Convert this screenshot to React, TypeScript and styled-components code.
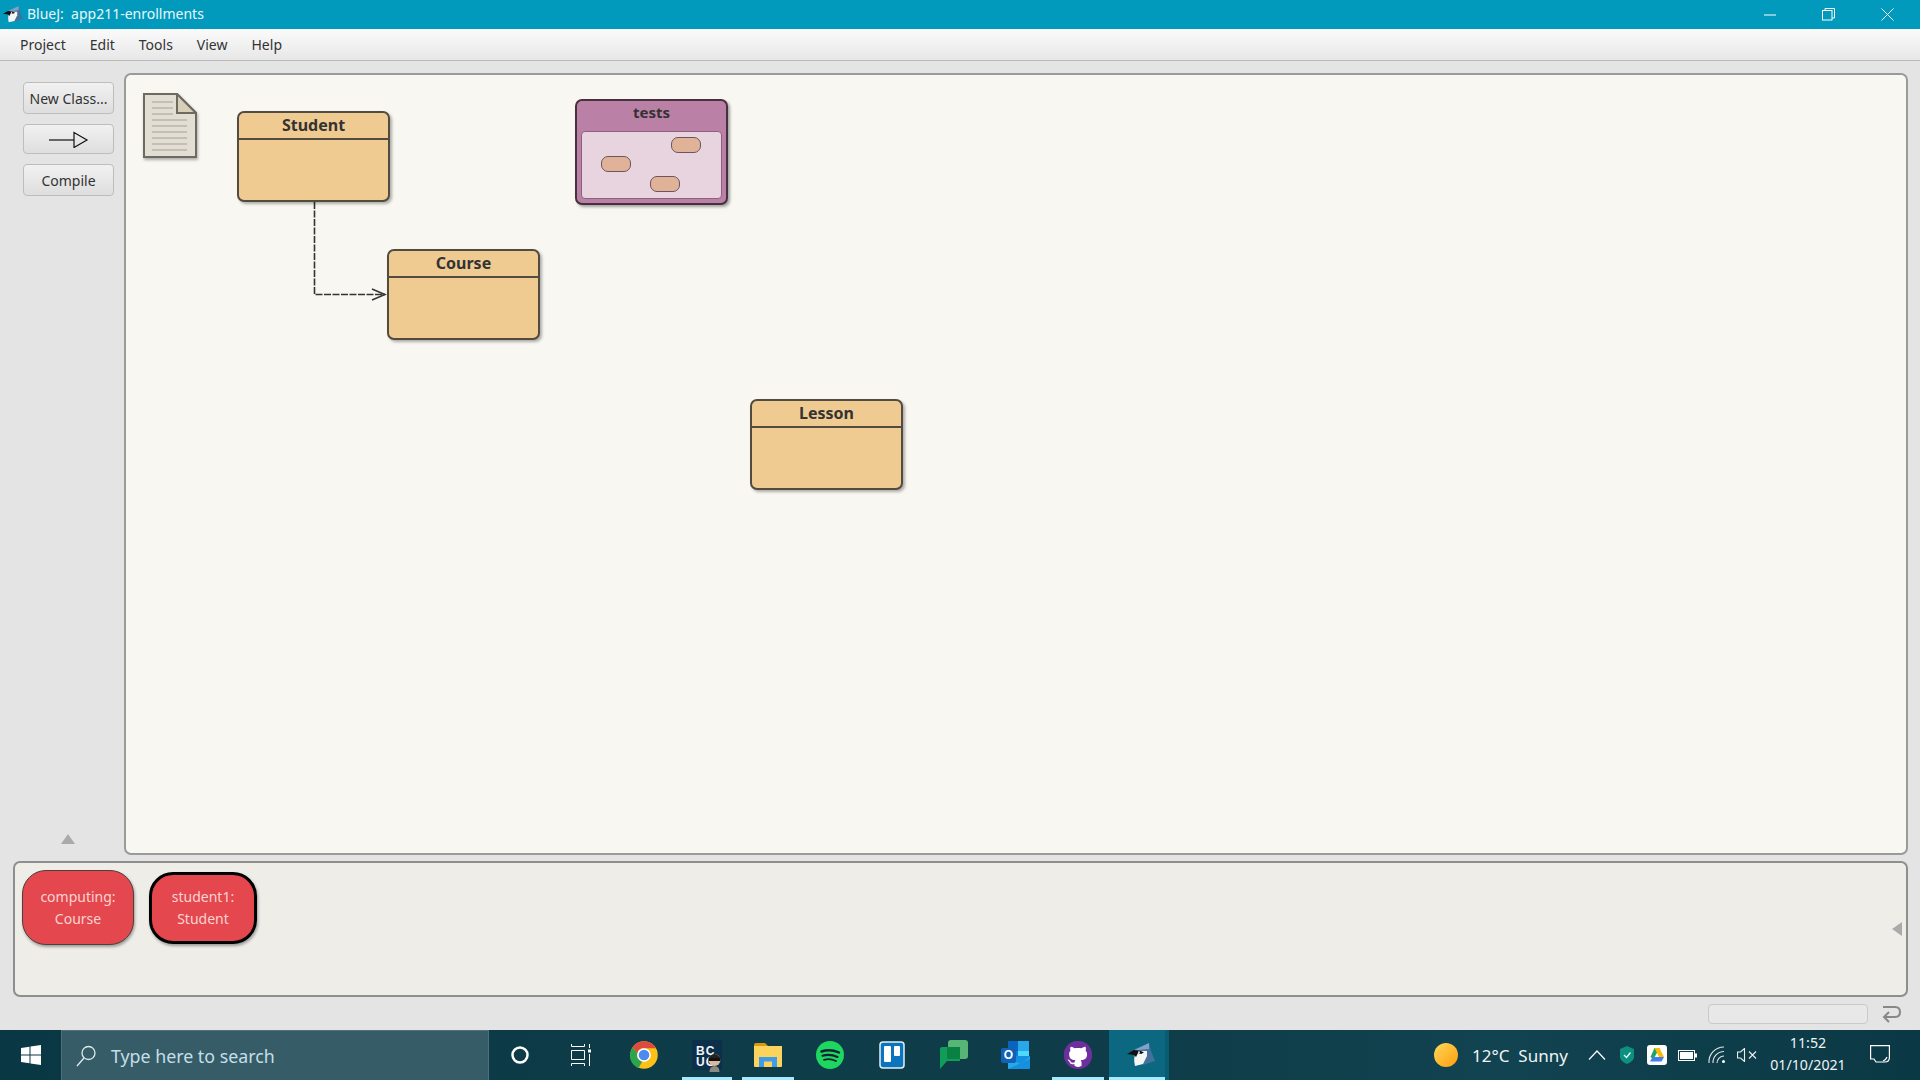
import React from 'react'
import styled, {createGlobalStyle} from 'styled-components'
import {FaGithub} from 'react-icons/fa'

const uiFont = `"Noto Sans", "Open Sans", "Liberation Sans", sans-serif`

const GlobalStyle = createGlobalStyle`
    html, body {
        margin: 0;
        padding: 0;
        height: 100%;
        overflow: hidden;
    }
    body {
        background: #e4e4e4;
        font-family: ${uiFont};
    }
`

const Window = styled.div`
    display: flex;
    flex-direction: column;
    width: 1920px;
    height: 1080px;
    background: #e4e4e4;
`

const TitleBar = styled.div`
    display: flex;
    align-items: center;
    flex: 0 0 29px;
    padding: 0 3px 0 3px;
    background: #019abd;
    color: #e8f7fb;
    font-size: 14px;
`

const TitleText = styled.span`
    margin: -2px 0 0 4px;
    white-space: pre;
`

const WindowButtons = styled.div`
    display: flex;
    margin-left: auto;
`

const WindowButton = styled.div`
    display: flex;
    align-items: center;
    justify-content: center;
    width: 59px;
    height: 29px;
`

const MenuBar = styled.div`
    display: flex;
    align-items: center;
    gap: 24px;
    flex: 0 0 32px;
    box-sizing: border-box;
    padding: 0 0 1px 20px;
    background: linear-gradient(#fbfbfb, #e7e7e7);
    border-bottom: 1px solid #b9b9b9;
    color: #333;
    font-size: 14px;
`

const Workspace = styled.div`
    display: flex;
    flex: 1;
    min-height: 0;
    padding: 12px 12px 6px 0;
`

const Sidebar = styled.div`
    display: flex;
    flex-direction: column;
    flex: 0 0 124px;
    box-sizing: border-box;
    padding: 9px 0 11px 23px;
`

const ToolButton = styled.div`
    display: flex;
    align-items: center;
    justify-content: center;
    box-sizing: border-box;
    width: 91px;
    height: ${p => p.$h || 31}px;
    margin-bottom: 10px;
    border: 1px solid #bdbdbd;
    border-radius: 4px;
    background: linear-gradient(#f1f1f1, #dedede);
    color: #333;
    font-size: 14px;
    white-space: nowrap;
`

const CollapseUp = styled.div`
    width: 0;
    height: 0;
    margin: auto 0 0 38px;
    border-left: 7.5px solid transparent;
    border-right: 7.5px solid transparent;
    border-bottom: 10px solid #aaa;
`

const Canvas = styled.div`
    position: relative;
    flex: 1;
    box-sizing: border-box;
    border: 2px solid #9a9a9a;
    border-radius: 7px;
    background: #f8f7f2;
`

const ArrowLayer = styled.svg`
    position: absolute;
    left: 0;
    top: 0;
    width: 100%;
    height: 100%;
`

const NoteIcon = styled.svg`
    position: absolute;
    left: 17px;
    top: 18px;
    filter: drop-shadow(1px 2px 1.5px rgba(0,0,0,.3));
`

const ClassNode = styled.div`
    position: absolute;
    left: ${p => p.$x}px;
    top: ${p => p.$y}px;
    box-sizing: border-box;
    width: 153px;
    height: 91px;
    border: 2px solid #514b40;
    border-radius: 7px;
    background: #efcb92;
    box-shadow: 2px 2px 3px rgba(0,0,0,.3);
`

const ClassName = styled.div`
    box-sizing: border-box;
    height: 27px;
    line-height: 24px;
    border-bottom: 2px solid #514b40;
    color: #333;
    font-size: 16px;
    font-weight: 700;
    text-align: center;
`

const PackageNode = styled.div`
    position: absolute;
    left: 449px;
    top: 24px;
    box-sizing: border-box;
    width: 153px;
    height: 106px;
    padding: 0 4px;
    border: 2px solid #47303f;
    border-radius: 7px;
    background: #bb80a6;
    box-shadow: 2px 2px 3px rgba(0,0,0,.35);
`

const PackageName = styled.div`
    height: 30px;
    line-height: 22px;
    color: #333;
    font-size: 15px;
    font-weight: 700;
    text-align: center;
`

const PackageInner = styled.div`
    position: relative;
    height: 66px;
    border: 1px solid #8f5f80;
    border-radius: 4px;
    background: #e8d4df;
`

const MiniClass = styled.div`
    position: absolute;
    left: ${p => p.$x}px;
    top: ${p => p.$y}px;
    box-sizing: border-box;
    width: 30px;
    height: 16px;
    border: 1.5px solid #6b5560;
    border-radius: 7px;
    background: #e0b398;
`

const Bench = styled.div`
    display: flex;
    align-items: center;
    justify-content: space-between;
    flex: 0 0 136px;
    box-sizing: border-box;
    margin: 0 12px 0 13px;
    padding: 0 4px 0 7px;
    border: 2px solid #8e8e8e;
    border-radius: 7px;
    background: #eeede8;
`

const BenchObjects = styled.div`
    display: flex;
    align-items: flex-start;
    align-self: flex-start;
    gap: 15px;
    padding-top: 7px;
`

const ObjectCard = styled.div`
    display: flex;
    align-items: center;
    justify-content: center;
    box-sizing: border-box;
    width: ${p => (p.$selected ? 108 : 112)}px;
    height: ${p => (p.$selected ? 72 : 75)}px;
    margin-top: ${p => (p.$selected ? 2 : 0)}px;
    border: ${p => (p.$selected ? '3px solid #000' : '1.5px solid #4c3f3f')};
    border-radius: 24px;
    background: #e4474d;
    box-shadow: 1px 2px 3px rgba(0,0,0,.35);
    color: #fbd3d3;
    font-size: 14px;
    line-height: 22px;
    text-align: center;
`

const CollapseLeft = styled.div`
    width: 0;
    height: 0;
    border-top: 7.5px solid transparent;
    border-bottom: 7.5px solid transparent;
    border-right: 10px solid #aaa;
`

const StatusRow = styled.div`
    display: flex;
    align-items: center;
    justify-content: flex-end;
    gap: 13px;
    flex: 0 0 33px;
    padding-right: 19px;
`

const StatusField = styled.div`
    box-sizing: border-box;
    width: 160px;
    height: 20px;
    border: 1.5px solid #cacaca;
    border-radius: 4px;
    background: #e8e8e8;
`

const Taskbar = styled.div`
    display: flex;
    align-items: stretch;
    flex: 0 0 50px;
    background: linear-gradient(90deg, #0a3744, #0f3c49 40%, #0f3c49 60%, #124350 78%, #0b3845);
    color: #eef4f5;
`

const StartButton = styled.div`
    display: flex;
    align-items: center;
    justify-content: center;
    width: 61px;
`

const SearchBox = styled.div`
    display: flex;
    align-items: center;
    gap: 15px;
    box-sizing: border-box;
    width: 428px;
    padding-left: 14px;
    background: #365d67;
    border: 1px solid #4f7079;
    border-width: 1px 1px 0 1px;
    color: #c5dfe8;
    font-size: 17.8px;
`

const TaskSlot = styled.div`
    position: relative;
    display: flex;
    align-items: center;
    justify-content: center;
    box-sizing: border-box;
    width: ${p => p.$w || 62}px;
    padding-left: ${p => (p.$current ? 3 : 0)}px;
    background: ${p => (p.$current ? 'linear-gradient(90deg, #0b6880 94%, #0a5c72 94%)' : 'transparent')};

    &::after {
        content: '';
        display: ${p => (p.$open ? 'block' : 'none')};
        position: absolute;
        left: ${p => (p.$current ? 0 : 5)}px;
        right: ${p => (p.$current ? 4 : 5)}px;
        bottom: 0;
        height: 3px;
        background: #a6ebfd;
    }
`

const BcBadge = styled.div`
    position: relative;
    box-sizing: border-box;
    width: 30px;
    height: 30px;
    padding: 6px 0 0 4px;
    background: #0c2f4c;
    color: #f2f6fa;
    font-family: "Liberation Sans", sans-serif;
    font-size: 12px;
    font-weight: 700;
    line-height: 11px;
    letter-spacing: 1px;
`

const BcFace = styled.svg`
    position: absolute;
    right: 0;
    bottom: -2px;
`

const OutlookWrap = styled.div`
    position: relative;
    width: 30px;
    height: 28px;
`

const OutlookLetter = styled.div`
    position: absolute;
    left: 0;
    top: 7px;
    width: 15px;
    height: 15px;
    line-height: 15px;
    border-radius: 2px;
    background: #0f62b8;
    color: #fff;
    font-family: "Liberation Sans", sans-serif;
    font-size: 12px;
    font-weight: 700;
    text-align: center;
`

const GithubBadge = styled.div`
    display: flex;
    align-items: center;
    justify-content: center;
    width: 28px;
    height: 28px;
    border-radius: 50%;
    background: radial-gradient(circle, #fff 58%, #6e2f9e 60%);
    color: #6e2f9e;
`

const Tray = styled.div`
    display: flex;
    align-items: center;
    margin-left: auto;
    padding-right: 30px;
`

const Sun = styled.div`
    width: 24px;
    height: 24px;
    margin-right: 14px;
    border-radius: 50%;
    background: linear-gradient(135deg, #ffd85c, #ff9d0a);
`

const Weather = styled.span`
    width: 110px;
    font-size: 17px;
    white-space: pre;
`

const TrayIcon = styled.div`
    display: flex;
    align-items: center;
    justify-content: center;
    width: 30px;
`

const Clock = styled.div`
    width: 84px;
    margin: 0 20px 2px 4px;
    font-size: 14.2px;
    line-height: 22px;
    text-align: center;
`

const BirdIcon = ({width, height}: {width: number; height: number}) => (
    <svg width={width} height={height} viewBox="0 0 28 24">
        <path d="M7 7 L22 0 L24 8 L28 18 L16 22 L12 10 Z" fill="#44709c"/>
        <path d="M7 7 L22 0 L22 6 L12 7 Z" fill="#7fa3c8"/>
        <path d="M9 8 L20 8 L20 13 L16 21 L8 23 Q6 16 9 8 Z" fill="#f5f5f5"/>
        <path d="M0 11 L7 7 L14 8 L17 9.500 L14 11 L11 10 L9 14 L7 12 Z" fill="#111"/>
        <circle cx="12" cy="9.200" r="0.900" fill="#fff"/>
    </svg>
)

const ChromeIcon = () => (
    <svg width="30" height="30" viewBox="0 0 48 48">
        <circle cx="24" cy="24" r="22" fill="#fbc116"/>
        <path d="M24 2a22 22 0 0 1 19 11H24a11 11 0 0 0-10.500 7.600L5.500 12A22 22 0 0 1 24 2z" fill="#dd4b3e"/>
        <path d="M5.500 12l8 8.600A11 11 0 0 0 21 34.600L15 45A22 22 0 0 1 5.500 12z" fill="#2da44e"/>
        <circle cx="24" cy="24" r="11" fill="#fff"/>
        <circle cx="24" cy="24" r="8.500" fill="#4d8bf0"/>
    </svg>
)

const FilesIcon = () => (
    <svg width="28" height="24" viewBox="0 0 28 24">
        <path d="M0 2 Q0 0 2 0 H11 L14 3 V6 H0 Z" fill="#d99a0c"/>
        <path d="M0 3 H28 V23 Q28 24 27 24 H1 Q0 24 0 23 Z" fill="#fcd35c"/>
        <path d="M5 24 V14 H23 V24 H18 V18.500 H10 V24 Z" fill="#3f9ce8"/>
    </svg>
)

const SpotifyIcon = () => (
    <svg width="28" height="28" viewBox="0 0 28 28">
        <circle cx="14" cy="14" r="14" fill="#1ed760"/>
        <path d="M5.500 10.500 Q14 7.500 23 11.500" stroke="#123" strokeWidth="2.400" fill="none" strokeLinecap="round"/>
        <path d="M6.500 14.800 Q14 12.500 21.500 16" stroke="#123" strokeWidth="2.100" fill="none" strokeLinecap="round"/>
        <path d="M8 18.800 Q14 17 20 20" stroke="#123" strokeWidth="1.800" fill="none" strokeLinecap="round"/>
    </svg>
)

const TrelloIcon = () => (
    <svg width="26" height="28" viewBox="0 0 26 28">
        <rect x="1" y="1" width="24" height="26" rx="3" fill="#0a75bc" stroke="#e4f0f6" strokeWidth="1.500"/>
        <rect x="5" y="5" width="7" height="16" rx="1" fill="#fff"/>
        <rect x="15" y="5" width="6" height="10" rx="1" fill="#fff"/>
    </svg>
)

const ChatIcon = () => (
    <svg width="28" height="30" viewBox="0 0 28 30">
        <rect x="8" y="0" width="20" height="19" rx="3" fill="#57b676"/>
        <path d="M2 7 H20 V21 H7 L0 29 V9 Q0 7 2 7 Z" fill="#0f9d58"/>
        <rect x="7" y="7" width="13" height="12" rx="1" fill="#0b8043"/>
    </svg>
)

const OutlookIcon = () => (
    <OutlookWrap>
        <svg width="30" height="28" viewBox="0 0 30 28">
            <rect x="7" y="0" width="10" height="10" fill="#0a64bd"/>
            <rect x="17" y="0" width="11" height="10" fill="#28a8ea"/>
            <rect x="7" y="10" width="10" height="10" fill="#0f78d4"/>
            <rect x="17" y="10" width="11" height="10" fill="#50d9ff"/>
            <path d="M7 15 H29 V27 Q29 28 28 28 H8 Q7 28 7 27 Z" fill="#1490df"/>
            <path d="M7 16 L19 23 L29 16 V18 L7 28 Z" fill="#28a8ea"/>
        </svg>
        <OutlookLetter>O</OutlookLetter>
    </OutlookWrap>
)

const DriveIcon = () => (
    <svg width="20" height="20" viewBox="0 0 20 20">
        <rect width="20" height="20" rx="3" fill="#fff"/>
        <path d="M7.500 3 H12.500 L9 9.500 L6.500 14 L3.500 12 Z" fill="#1da462"/>
        <path d="M7.500 3 H12.500 L17 12 H12 Z" fill="#fbbc04"/>
        <path d="M5.500 12 H17 L14.500 16.500 H3 Z" fill="#3f80ed"/>
    </svg>
)

const App = () => (
    <Window>
        <GlobalStyle/>
        <TitleBar>
            <BirdIcon width={20} height={17}/>
            <TitleText>BlueJ:  app211-enrollments</TitleText>
            <WindowButtons>
                <WindowButton>
                    <svg width="12" height="2"><rect width="12" height="1" y="0.500" fill="#fff"/></svg>
                </WindowButton>
                <WindowButton>
                    <svg width="13" height="13" viewBox="0 0 13 13" fill="none" stroke="#fff">
                        <rect x="0.500" y="2.500" width="9.500" height="9.500"/>
                        <path d="M3 2.500 V0.500 H12.500 V10 H10"/>
                    </svg>
                </WindowButton>
                <WindowButton>
                    <svg width="13" height="13" viewBox="0 0 13 13" stroke="#fff"><path d="M0.500 0.500 L12.500 12.500 M12.500 0.500 L0.500 12.500"/></svg>
                </WindowButton>
            </WindowButtons>
        </TitleBar>
        <MenuBar>
            <span>Project</span>
            <span>Edit</span>
            <span>Tools</span>
            <span>View</span>
            <span>Help</span>
        </MenuBar>
        <Workspace>
            <Sidebar>
                <ToolButton $h={32}>New Class...</ToolButton>
                <ToolButton $h={30}>
                    <svg width="40" height="18" viewBox="0 0 40 18" fill="none" stroke="#111" strokeWidth="1.200">
                        <path d="M0 10 H25"/>
                        <path d="M25 2.500 L38 10 L25 17.500 Z"/>
                    </svg>
                </ToolButton>
                <ToolButton $h={32}>Compile</ToolButton>
                <CollapseUp/>
            </Sidebar>
            <Canvas>
                <NoteIcon width="54" height="66" viewBox="0 0 54 66">
                    <path d="M1 1 H34 L53 20 V64 H1 Z" fill="#e2ded3" stroke="#6d6a62" strokeWidth="2"/>
                    <path d="M34 1 L53 20 H34 Z" fill="#d8cfb8" stroke="#6d6a62" strokeWidth="2"/>
                    <path d="M9 9 H30 M9 15 H30 M9 21 H30 M9 27 H44 M9 33 H44 M9 39 H44 M9 45 H44 M9 51 H44 M9 57 H44" stroke="#c3bfb2" strokeWidth="2"/>
                </NoteIcon>
                <ArrowLayer>
                    <path d="M188.500 127 V219.500 H259" fill="none" stroke="#333" strokeWidth="1.600" strokeDasharray="7 1.500"/>
                    <path d="M246 214 L259 219.500 L246 225" fill="none" stroke="#333" strokeWidth="1.500"/>
                </ArrowLayer>
                <ClassNode $x={111} $y={36}><ClassName>Student</ClassName></ClassNode>
                <ClassNode $x={261} $y={174}><ClassName>Course</ClassName></ClassNode>
                <ClassNode $x={624} $y={324}><ClassName>Lesson</ClassName></ClassNode>
                <PackageNode>
                    <PackageName>tests</PackageName>
                    <PackageInner>
                        <MiniClass $x={89} $y={5}/>
                        <MiniClass $x={19} $y={24}/>
                        <MiniClass $x={68} $y={44}/>
                    </PackageInner>
                </PackageNode>
            </Canvas>
        </Workspace>
        <Bench>
            <BenchObjects>
                <ObjectCard>computing:<br/>Course</ObjectCard>
                <ObjectCard $selected>student1:<br/>Student</ObjectCard>
            </BenchObjects>
            <CollapseLeft/>
        </Bench>
        <StatusRow>
            <StatusField/>
            <svg width="20" height="20" viewBox="0 0 20 20" fill="none" stroke="#888" strokeWidth="2">
                <path d="M2 3 H14 Q19 3 19 8 Q19 13 14 13 H3"/>
                <path d="M8 8 L3 13 L8 18"/>
            </svg>
        </StatusRow>
        <Taskbar>
            <StartButton>
                <svg width="20" height="20" viewBox="0 0 20 20" fill="#fff">
                    <path d="M0 3 L8.500 1.800 V9.500 H0 Z M9.500 1.600 L20 0 V9.500 H9.500 Z M0 10.500 H8.500 V18.200 L0 17 Z M9.500 10.500 H20 V20 L9.500 18.400 Z"/>
                </svg>
            </StartButton>
            <SearchBox>
                <svg width="20" height="22" viewBox="0 0 20 22" fill="none" stroke="#dfe9ec" strokeWidth="1.300">
                    <circle cx="12.500" cy="8" r="6.500"/>
                    <path d="M8 13 L1 21"/>
                </svg>
                Type here to search
            </SearchBox>
            <TaskSlot $w={62}>
                <svg width="20" height="20" viewBox="0 0 20 20" fill="none" stroke="#fff" strokeWidth="2.500"><circle cx="10" cy="10" r="7.500"/></svg>
            </TaskSlot>
            <TaskSlot $w={60}>
                <svg width="20" height="22" viewBox="0 0 20 22" fill="none" stroke="#fff" strokeWidth="1">
                    <path d="M0.500 0 V2.500 H13.500 V0 M0.500 6.500 H13.500 V15.500 H0.500 Z M0.500 22 V19.500 H13.500 V22"/>
                    <path d="M18.500 0 V4 M18.500 10 V22"/>
                    <rect x="17" y="5.500" width="3" height="3" fill="#fff" stroke="none"/>
                </svg>
            </TaskSlot>
            <TaskSlot $w={66}><ChromeIcon/></TaskSlot>
            <TaskSlot $w={60} $open>
                <BcBadge>
                    BC<br/>UC
                    <BcFace width="15" height="20" viewBox="0 0 14 20">
                        <path d="M2 20 Q2 14 7 14 Q12 14 12 20 Z" fill="#8a8a80"/>
                        <circle cx="7" cy="8" r="6" fill="#d9b8a0"/>
                        <path d="M1 6 Q7 -2 13 6 Z" fill="#222"/>
                        <rect x="1" y="6" width="12" height="3" fill="#111"/>
                    </BcFace>
                </BcBadge>
            </TaskSlot>
            <TaskSlot $w={62} $open><FilesIcon/></TaskSlot>
            <TaskSlot $w={62}><SpotifyIcon/></TaskSlot>
            <TaskSlot $w={62}><TrelloIcon/></TaskSlot>
            <TaskSlot $w={62}><ChatIcon/></TaskSlot>
            <TaskSlot $w={62}><OutlookIcon/></TaskSlot>
            <TaskSlot $w={62} $open>
                <GithubBadge><FaGithub size={30}/></GithubBadge>
            </TaskSlot>
            <TaskSlot $w={60} $open $current><BirdIcon width={28} height={24}/></TaskSlot>
            <Tray>
                <Sun/>
                <Weather>12°C  Sunny</Weather>
                <TrayIcon>
                    <svg width="18" height="10" viewBox="0 0 18 10" fill="none" stroke="#fff" strokeWidth="1.200"><path d="M1 9.500 L9 1 L17 9.500"/></svg>
                </TrayIcon>
                <TrayIcon>
                    <svg width="14" height="18" viewBox="0 0 14 18">
                        <path d="M7 0 L14 3 V11 Q14 15 7 18 Q0 15 0 11 V3 Z" fill="#0e9080"/>
                        <path d="M4 9 L6.500 11.500 L10.500 6.500" fill="none" stroke="#dff" strokeWidth="1.300"/>
                    </svg>
                </TrayIcon>
                <TrayIcon><DriveIcon/></TrayIcon>
                <TrayIcon>
                    <svg width="19" height="11" viewBox="0 0 19 11">
                        <rect x="0.500" y="0.500" width="16" height="10" fill="none" stroke="#fff"/>
                        <rect x="2" y="2" width="13" height="7" fill="#fff"/>
                        <rect x="17" y="3.500" width="2" height="4" fill="#fff"/>
                    </svg>
                </TrayIcon>
                <TrayIcon>
                    <svg width="18" height="18" viewBox="0 0 18 18" fill="none" stroke="#dfe8ea" strokeWidth="1.100">
                        <path d="M1 17 A15 15 0 0 1 16 1 M5 17 A11 11 0 0 1 16 5.500 M9 17 A7 7 0 0 1 16 10"/>
                        <circle cx="15.500" cy="15.500" r="1.500" fill="#fff" stroke="none"/>
                    </svg>
                </TrayIcon>
                <TrayIcon>
                    <svg width="20" height="14" viewBox="0 0 20 14" fill="none" stroke="#eee" strokeWidth="1.100">
                        <path d="M0.500 4 H3.500 L7.500 0.500 V13.500 L3.500 10 H0.500 Z"/>
                        <path d="M12 3.500 L19 10.500 M19 3.500 L12 10.500"/>
                    </svg>
                </TrayIcon>
                <Clock>11:52<br/>01/10/2021</Clock>
                <svg width="20" height="20" viewBox="0 0 20 20" fill="none" stroke="#fff" strokeWidth="1.200">
                    <path d="M0.600 0.600 H19.400 V13 Q19 17 15 17 H6 L4 14 H0.600 Z"/>
                    <path d="M13 16 Q16 15 17 12"/>
                </svg>
            </Tray>
        </Taskbar>
    </Window>
)

export default App
